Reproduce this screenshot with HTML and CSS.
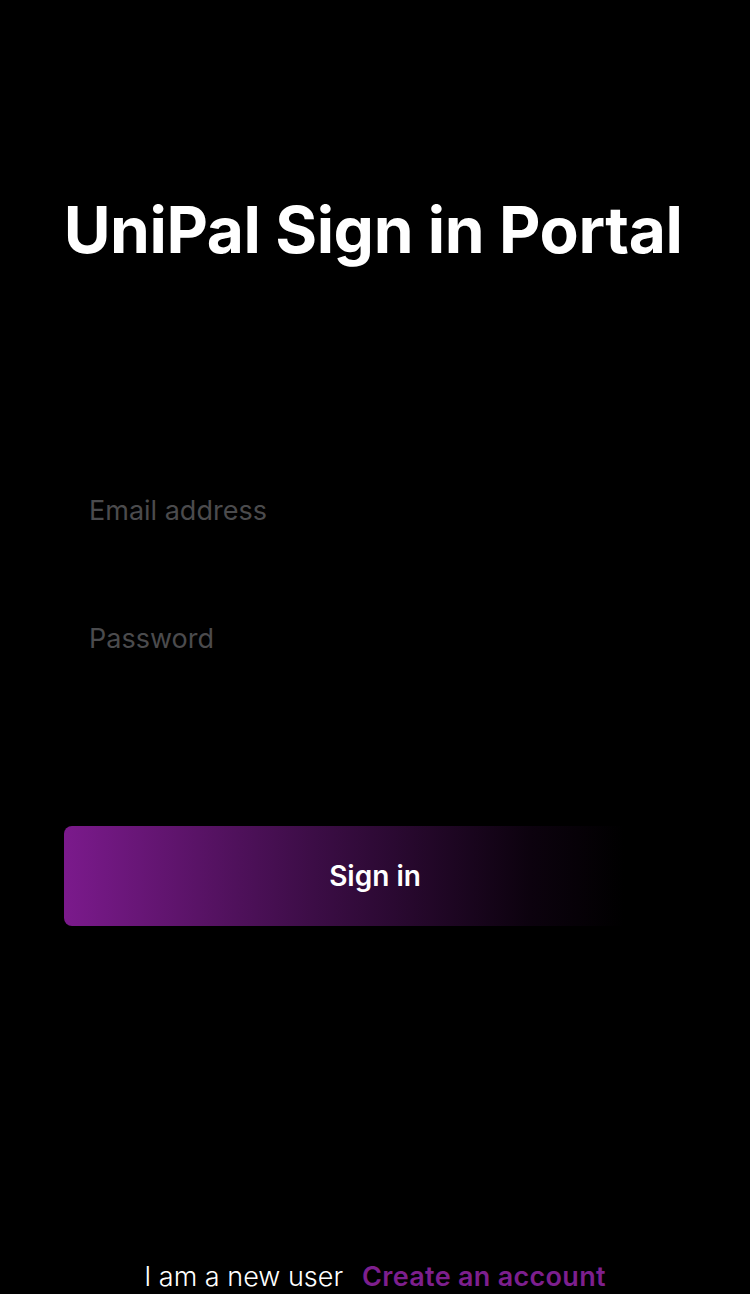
FILE: index.html
```html
<!DOCTYPE html>
<html lang="en">
<head>
<meta charset="utf-8">
<title>UniPal Sign in Portal</title>
<link rel="stylesheet" href="styles.css">
</head>
<body>
<main class="page">
  <h1 class="title">UniPal Sign in Portal</h1>
  <form class="form">
    <input class="field" type="email" placeholder="Email address">
    <input class="field" type="password" placeholder="Password">
    <button class="btn" type="button">Sign in</button>
  </form>
  <footer class="footer">
    <span class="footer-text">I am a new user</span>
    <a class="footer-link" href="#">Create an account</a>
  </footer>
</main>
</body>
</html>
```

FILE: styles.css
```css
html, body {
  margin: 0;
  padding: 0;
  background: #000;
  height: 100%;
  overflow: hidden;
}
.page {
  display: flex;
  flex-direction: column;
  align-items: stretch;
  padding: 0 64px;
  height: 1294px;
  box-sizing: border-box;
  font-family: Inter, "Noto Sans", sans-serif;
}
.title {
  margin: 192px 0 0;
  color: #fff;
  font-weight: 700;
  font-size: 64px;
  line-height: 76px;
  letter-spacing: -0.4px;
  text-align: center;
  white-space: nowrap;
  transform: translateX(-2px);
}
.form {
  display: flex;
  flex-direction: column;
  margin-top: 222px;
}
.field {
  background: transparent;
  border: none;
  outline: none;
  padding: 0 0 0 25px;
  height: 40px;
  font-family: inherit;
  font-size: 27px;
  color: #fff;
}
.field + .field {
  margin-top: 88px;
}
.field::placeholder {
  color: #4b4b4d;
}
.btn {
  margin-top: 168px;
  height: 100px;
  border: none;
  border-radius: 8px;
  background: linear-gradient(90deg, #7b1a8c 0%, #3c0d46 40%, #0c020e 75%, #000 90%);
  color: #fff;
  font-family: inherit;
  font-weight: 600;
  font-size: 28px;
  cursor: pointer;
}
.footer {
  margin-top: auto;
  display: flex;
  justify-content: center;
  align-items: baseline;
  gap: 19px;
  height: 34px;
  font-size: 27px;
  line-height: 34px;
}
.footer-text {
  color: #fff;
  font-weight: 300;
}
.footer-link {
  color: #7d1f8e;
  font-weight: 600;
  letter-spacing: 0.3px;
  text-decoration: none;
}
```
